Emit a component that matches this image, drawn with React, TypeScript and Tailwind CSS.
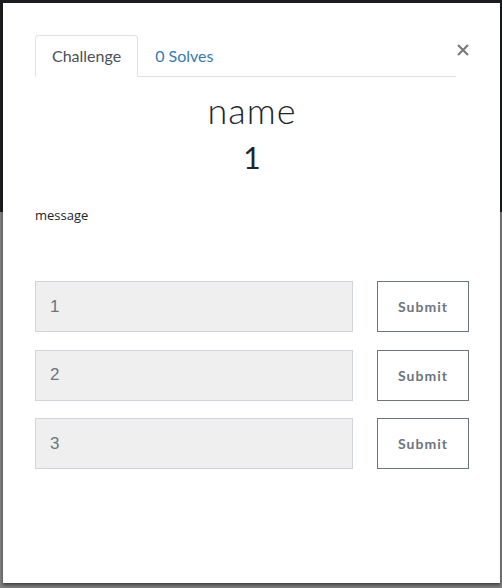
import React from "react";

const rows = ["1", "2", "3"];

export default function App() {
  return (
    <div className="relative w-[502px] h-[588px] overflow-hidden" style={{ fontFamily: "Lato, 'Open Sans', sans-serif" }}>
      <div className="flex h-full flex-col">
        <div className="h-[212px] bg-[#1b1d20]" />
        <div className="flex-1 bg-[#7f7f7f]" />
      </div>
      <div className="absolute left-[3px] top-[3px] flex h-[580px] w-[497px] flex-col bg-white pl-[32px] pr-[31px] pt-[32px] shadow-[0_2px_3px_rgba(0,0,0,0.5)]">
        <div className="flex items-start">
          <div className="flex flex-1 border-b border-[#dee2e6]">
            <div className="-mb-px rounded-t-[4px] border border-b-white border-[#dee2e6] bg-white px-4 py-2 text-[16px] leading-[23px] text-[#495057]">
              Challenge
            </div>
            <div className="border border-transparent px-4 py-2 text-[16px] leading-[23px] text-[#337ab7]">0 Solves</div>
          </div>
          <div className="flex w-[13px] shrink-0 justify-end pt-[2px]">
            <svg width="12" height="12" viewBox="0 0 12 12" className="mt-[7px]">
              <path d="M1 1 L11 11 M11 1 L1 11" stroke="#7a7a7a" strokeWidth="2.2" />
            </svg>
          </div>
        </div>
        <div className="mt-[9px] text-center text-[36px] font-light leading-[48px] tracking-[1px] text-[#212529]">name</div>
        <div className="mt-[5px] text-center text-[30px] leading-[36px] text-[#212529]">1</div>
        <div className="mt-[30px] text-[13px] leading-5 text-[#212529]" style={{ fontFamily: "'Open Sans', sans-serif" }}>
          message
        </div>
        <div className="mt-[56px] flex flex-col gap-[17.5px]">
          {rows.map((r) => (
            <div key={r} className="flex items-center gap-[24px]">
              <div className="flex h-[51px] w-[318px] shrink-0 items-center border border-[#ced4da] bg-[#efefef] px-[14px] text-[17px] text-[#6c757d]" style={{ fontFamily: "'Liberation Sans', Arial, sans-serif" }}>
                {r}
              </div>
              <div className="flex h-[51px] w-[92px] shrink-0 items-center justify-center border border-[#6c757d] text-[14px] font-bold tracking-[1px] text-[#6c757d]">
                Submit
              </div>
            </div>
          ))}
        </div>
      </div>
    </div>
  );
}
